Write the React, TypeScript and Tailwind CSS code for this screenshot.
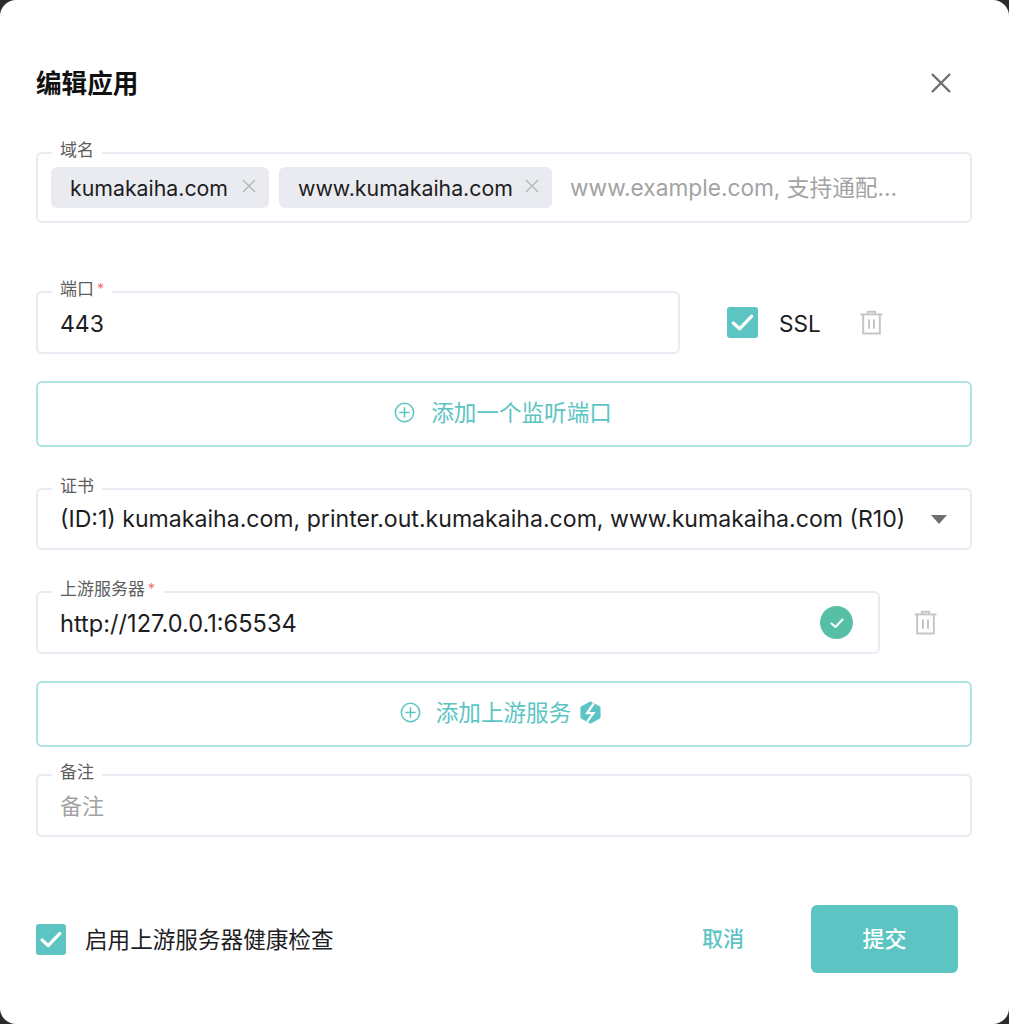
const FONT = "font-['Inter','Noto_Sans_CJK_SC',sans-serif]";

function CheckMark({ className }: { className?: string }) {
  return (
    <svg viewBox="0 0 32 32" className={className} fill="none" aria-hidden="true">
      <path d="M6.5 16.5 L13 22.5 L25.5 9.5" stroke="#fff" strokeWidth="3.4" strokeLinecap="round" strokeLinejoin="round" />
    </svg>
  );
}

function Checkbox({ size }: { size: "sm" | "lg" }) {
  return (
    <span
      className={
        size === "lg"
          ? "flex h-[31px] w-[31px] shrink-0 items-center justify-center rounded-[3px] bg-[#5cc5c3]"
          : "flex h-[31px] w-[30px] shrink-0 items-center justify-center rounded-[3px] bg-[#5cc5c3]"
      }
    >
      <CheckMark className="h-[31px] w-[31px]" />
    </span>
  );
}

function TrashIcon() {
  return (
    <svg viewBox="0 0 24 24" className="h-[25px] w-[25px]" fill="none" stroke="#c6c6c6" strokeWidth="1.9" aria-hidden="true">
      <path d="M1.5 4.2 H22.5" />
      <path d="M8.5 3.6 V1.6 H15.5 V3.6" />
      <path d="M4 4.5 V22.6 H20 V4.5" />
      <path d="M9.6 9 V18 M14.4 9 V18" />
    </svg>
  );
}

function PlusCircle() {
  return (
    <svg viewBox="0 0 22 22" className="h-[21px] w-[21px]" fill="none" stroke="#5cc5c3" strokeWidth="1.6" aria-hidden="true">
      <circle cx="11" cy="11" r="9.6" />
      <path d="M5.6 11 H16.4 M11 5.6 V16.4" />
    </svg>
  );
}

function BoltHex() {
  return (
    <svg viewBox="0 0 22 24" className="h-[23px] w-[21px]" fill="none" aria-hidden="true">
      <path d="M11 0.8 L21 6.2 V17.8 L11 23.2 L1 17.8 V6.2 Z" fill="#5cc5c3" stroke="#5cc5c3" strokeLinejoin="round" />
      <path d="M14.5 2.5 L7.5 12.6 H14 L7.5 21.5" stroke="#fff" strokeWidth="2.4" strokeLinejoin="miter" />
    </svg>
  );
}

function SmallX() {
  return (
    <svg viewBox="0 0 14 14" className="mb-[4px] h-[14px] w-[14px]" fill="none" stroke="#b4b5b9" strokeWidth="1.4" aria-hidden="true">
      <path d="M1 1 L13 13 M13 1 L1 13" />
    </svg>
  );
}

function Field({
  label,
  required,
  className,
  children,
}: {
  label: string;
  required?: boolean;
  className: string;
  children: React.ReactNode;
}) {
  return (
    <div className={`relative rounded-[6px] border-2 border-[#e8ebf1] ${className}`}>
      <span className="absolute left-[14px] top-[-14px] flex h-[20px] items-center gap-[3px] bg-white px-[8px] text-[17px] leading-[20px] text-[#5d5d5d]">
        {label}
        {required && <span className="text-[14px] text-[#f56c6c]">*</span>}
      </span>
      {children}
    </div>
  );
}

function Tag({ text, width }: { text: string; width: string }) {
  return (
    <span className={`flex h-[41px] items-center justify-between rounded-[6px] bg-[#e9ebf0] pl-[19px] pr-[13px] ${width}`}>
      <span className="mt-[2px] text-[21.3px] text-[#1d1d1f]">{text}</span>
      <SmallX />
    </span>
  );
}

function AddButton({ className, children }: { className: string; children: React.ReactNode }) {
  return (
    <div
      className={`flex h-[66px] items-center justify-center rounded-[6px] border-2 border-[#ade3e1] text-[22.6px] text-[#5cc5c3] ${className}`}
    >
      {children}
    </div>
  );
}

export default function App() {
  return (
    <div className={`h-[1024px] w-full bg-[#2b2b2b] ${FONT}`}>
      <div className="flex h-full flex-col rounded-[16px] bg-white pl-[36px] pr-[37px]">
        <div className="mt-[68px] flex h-[32px] items-center justify-between">
          <h1 className="text-[25.6px] font-semibold leading-[32px] text-[#111111]">编辑应用</h1>
          <svg viewBox="0 0 22 22" className="mb-[2px] mr-[20px] h-[22px] w-[22px]" fill="none" stroke="#6f6f6f" strokeWidth="2.4" aria-hidden="true">
            <path d="M2 2 L20 20 M20 2 L2 20" />
          </svg>
        </div>

        <Field label="域名" className="mt-[52px] flex h-[71px] items-center gap-[10px] pl-[13px]">
          <Tag text="kumakaiha.com" width="w-[218px]" />
          <Tag text="www.kumakaiha.com" width="w-[273px]" />
          <span className="ml-[8px] mt-[2px] text-[22.7px] text-[#a3a3a3]">www.example.com, 支持通配...</span>
        </Field>

        <div className="mt-[68px] flex h-[63px] items-center">
          <Field label="端口" required className="flex h-[63px] w-[644px] items-center pl-[22px]">
            <span className="mt-[3px] text-[23px] text-[#1d1d1f]">443</span>
          </Field>
          <div className="ml-[47px]">
            <Checkbox size="lg" />
          </div>
          <span className="ml-[21px] mt-[2px] text-[22.6px] text-[#1d1d1f]">SSL</span>
          <span className="ml-[38px]">
            <TrashIcon />
          </span>
        </div>

        <AddButton className="mt-[27px] gap-[16px] pb-[3px] pr-[2px]">
          <PlusCircle />
          添加一个监听端口
        </AddButton>

        <Field label="证书" className="mt-[41px] flex h-[62px] items-center justify-between pl-[22px] pr-[23px]">
          <span className="mt-[1px] text-[23.1px] text-[#1d1d1f]">
            (ID:1) kumakaiha.com, printer.out.kumakaiha.com, www.kumakaiha.com (R10)
          </span>
          <span className="h-0 w-0 border-x-[8px] border-t-[9px] border-x-transparent border-t-[#6f6f6f]" />
        </Field>

        <div className="mt-[41px] flex h-[63px] items-center">
          <Field label="上游服务器" required className="flex h-[63px] w-[844px] items-center justify-between pl-[22px] pr-[25px]">
            <span className="mt-[2px] text-[23.6px] text-[#1d1d1f]">http://127.0.0.1:65534</span>
            <span className="flex h-[33px] w-[33px] items-center justify-center rounded-full bg-[#58bfa7]">
              <svg viewBox="0 0 16 16" className="h-[16px] w-[16px]" fill="none" stroke="#fff" strokeWidth="2" strokeLinecap="round" strokeLinejoin="round" aria-hidden="true">
                <path d="M2.5 8.5 L6.5 12 L13.5 4.5" />
              </svg>
            </span>
          </Field>
          <span className="ml-[33px]">
            <TrashIcon />
          </span>
        </div>

        <AddButton className="mt-[27px] gap-[15px] pb-[3px] pr-[7px]">
          <PlusCircle />
          <span className="flex items-center gap-[9px]">
            添加上游服务
            <BoltHex />
          </span>
        </AddButton>

        <Field label="备注" className="mt-[27px] flex h-[63px] items-center pl-[22px]">
          <span className="mt-[1px] text-[22px] text-[#a3a3a3]">备注</span>
        </Field>

        <div className="mt-[68px] flex h-[68px] items-center">
          <Checkbox size="sm" />
          <span className="ml-[19px] mt-[1px] text-[22.6px] text-[#1d1d1f]">启用上游服务器健康检查</span>
          <span className="ml-auto text-[21px] font-medium text-[#5cc5c3]">取消</span>
          <button
            type="button"
            className="ml-[67px] mr-[14px] h-[68px] w-[147px] rounded-[6px] bg-[#5cc5c3] text-[22px] font-medium text-white"
          >
            提交
          </button>
        </div>
      </div>
    </div>
  );
}
